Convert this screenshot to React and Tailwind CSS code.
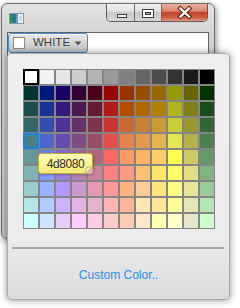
const RAW = [
  [255, 255, 255], [242, 242, 242], [230, 230, 230], [204, 204, 204], [179, 179, 179], [153, 153, 153], [128, 128, 128], [102, 102, 102], [77, 77, 77], [51, 51, 51], [26, 26, 26], [0, 0, 0],
  [0, 51, 51], [0, 25, 128], [25, 0, 104], [51, 0, 51], [77, 0, 26], [153, 0, 0], [153, 51, 0], [153, 77, 0], [153, 102, 0], [153, 153, 0], [102, 102, 0], [0, 51, 0],
  [26, 77, 77], [26, 51, 153], [51, 26, 128], [77, 26, 77], [102, 26, 51], [179, 26, 26], [179, 77, 0], [179, 102, 0], [179, 128, 0], [179, 179, 26], [128, 128, 26], [26, 77, 26],
  [51, 102, 102], [51, 77, 179], [77, 51, 153], [102, 51, 102], [128, 51, 77], [204, 51, 51], [204, 102, 51], [204, 128, 51], [204, 153, 51], [204, 204, 51], [153, 153, 51], [51, 102, 51],
  [77, 128, 128], [77, 102, 204], [102, 77, 179], [128, 77, 128], [153, 77, 102], [230, 77, 77], [230, 128, 77], [230, 153, 77], [230, 179, 77], [230, 230, 77], [179, 179, 77], [77, 128, 77],
  [102, 153, 153], [102, 128, 230], [128, 102, 204], [153, 102, 153], [179, 102, 128], [255, 102, 102], [255, 153, 102], [255, 179, 102], [255, 204, 102], [255, 255, 77], [204, 204, 102], [102, 153, 102],
  [128, 179, 179], [128, 153, 255], [153, 128, 230], [179, 128, 179], [204, 128, 153], [255, 128, 128], [255, 153, 128], [255, 191, 115], [255, 230, 102], [255, 255, 102], [224, 224, 128], [128, 179, 128],
  [153, 204, 204], [153, 179, 255], [179, 153, 255], [204, 153, 204], [230, 153, 179], [255, 153, 153], [255, 179, 128], [255, 204, 153], [255, 230, 128], [255, 255, 128], [230, 230, 153], [153, 204, 153],
  [179, 230, 230], [179, 204, 255], [204, 179, 255], [230, 179, 230], [230, 179, 204], [255, 179, 179], [255, 179, 153], [255, 230, 179], [255, 230, 153], [255, 255, 153], [230, 230, 179], [179, 230, 179],
  [204, 255, 255], [204, 230, 255], [230, 204, 255], [255, 204, 255], [255, 204, 230], [255, 204, 204], [255, 204, 179], [255, 230, 204], [255, 255, 179], [255, 255, 204], [230, 230, 204], [204, 255, 204],
];

const SELECTED = 0;
const HOVER = 48;

function AppIcon() {
  return (
    <svg width="15" height="11" viewBox="0 0 15 11" className="mt-[9px]">
      <rect x="0.5" y="0.5" width="14" height="10" fill="#eef2f6" stroke="#8a97a6" />
      <rect x="1" y="1" width="3" height="9" fill="#2f8a5a" />
      <rect x="4" y="1" width="3" height="9" fill="#2b6fb8" />
      <rect x="7" y="1" width="2" height="9" fill="#5aa0d8" />
      <rect x="10" y="3" width="3" height="5" fill="#c8d6e4" />
    </svg>
  );
}

function Caption() {
  const glass = 'bg-[linear-gradient(to_bottom,#f3f3f3_0%,#e1e1e1_42%,#c9c9c9_50%,#d6d6d6_100%)]';
  return (
    <div className="flex h-[18px] overflow-hidden rounded-b-[5px] border border-t-0 border-[#5e5e5e]">
      <div className={`w-[28px] border-r border-[#6c6c6c] ${glass}`}>
        <svg width="28" height="18">
          <rect x="10.5" y="10.5" width="9" height="3" fill="#fff" stroke="#3a3a3a" />
        </svg>
      </div>
      <div className={`w-[27px] border-r border-[#6c6c6c] ${glass}`}>
        <svg width="27" height="18">
          <rect x="7.5" y="5.5" width="11" height="8" fill="#fff" stroke="#3a3a3a" />
          <rect x="10.5" y="8.5" width="5" height="2" fill="#a8a8a8" stroke="#3a3a3a" />
        </svg>
      </div>
      <div className="w-[45px] bg-[linear-gradient(to_bottom,#eab0a2_0%,#dc8470_42%,#c5432c_50%,#cd5a40_78%,#e39a83_100%)]">
        <svg width="45" height="18">
          <path d="M18.5 4.5 L27 12.5 M27 4.5 L18.5 12.5" stroke="#4a1a10" strokeWidth="4.4" strokeLinecap="square" />
          <path d="M18.5 4.5 L27 12.5 M27 4.5 L18.5 12.5" stroke="#fff" strokeWidth="2.4" strokeLinecap="square" />
        </svg>
      </div>
    </div>
  );
}

function Combo() {
  return (
    <div className="flex h-[20px] w-[80px] items-center rounded-[3px] border border-[#3f8fd9] bg-[linear-gradient(to_bottom,#e9e9e9,#d5d5d5_50%,#c3c3c3)] pl-[4px] pr-[5px] shadow-[inset_0_1px_0_#f7f7f7]">
      <span className="h-[12px] w-[12px] border border-[#8c8c8c] bg-white" />
      <span className="ml-[8px] text-[11.5px] leading-none text-[#3b3b3b]">WHITE</span>
      <svg width="8" height="5" viewBox="0 0 8 5" className="ml-auto">
        <path d="M0.5 0.5 H7.5 L4 4.5 Z" fill="#555" />
      </svg>
    </div>
  );
}

function Swatch({ rgb, index }) {
  return (
    <div
      className="relative h-[16px] w-[16px] border border-[#858585]"
      style={{ backgroundColor: `rgb(${rgb[0]},${rgb[1]},${rgb[2]})` }}
    >
      {index === SELECTED && <div className="absolute -inset-[1px] border-2 border-black" />}
      {index === HOVER && <div className="absolute -inset-[1px] border-2 border-[#1484e6]" />}
    </div>
  );
}

function Tooltip() {
  return (
    <div className="absolute left-[30px] top-[99px] flex h-[21px] w-[55px] items-center justify-center rounded-[3px] border border-[#bfae3c] bg-[linear-gradient(to_bottom,#fffcb8,#f4ea78)] text-[12px] tracking-[-0.4px] text-[#2e2e2e] shadow-[1px_1px_2px_rgba(0,0,0,0.25)]">
      4d8080
      <svg width="8" height="8" viewBox="0 0 8 8" className="absolute bottom-[-1px] right-[-1px]">
        <path d="M0.5 7.5 L7.5 0.5 L7.5 7.5 Z" fill="#eab0b8" />
        <path d="M0.5 7.5 L7.5 0.5 L1.5 1.5 Z" fill="#fffde6" stroke="#b9a94a" strokeWidth="0.8" />
      </svg>
    </div>
  );
}

export default function App() {
  return (
    <div className="relative h-[308px] w-[240px] overflow-hidden bg-white font-['Liberation_Sans',sans-serif]">
      <div className="absolute left-[1px] top-[3px] flex h-[236px] w-[214px] flex-col rounded-[6px] border border-[#6f6f6f] bg-[linear-gradient(to_bottom,#e3e3e3,#d2d2d2_14%,#c3c3c3)] shadow-[1px_2px_6px_rgba(0,0,0,0.45)]">
        <div className="flex h-[28px] items-start justify-between pl-[7px] pr-[6px]">
          <AppIcon />
          <Caption />
        </div>
        <div className="mx-[5px] mb-[5px] flex-1 border border-[#646464] bg-white">
          <Combo />
        </div>
      </div>

      <div className="absolute left-[7px] top-[53px] flex h-[247px] w-[223px] flex-col rounded-[4px] border border-[#a9a9a9] bg-[linear-gradient(to_bottom,#efefef,#ececec_75%,#dbdbdb)] px-[4px] shadow-[0_0_7px_rgba(0,0,0,0.45)]">
        <div className="ml-[11px] mt-[15px] grid w-[192px] grid-cols-[repeat(12,16px)]">
          {RAW.map((rgb, i) => (
            <Swatch key={i} rgb={rgb} index={i} />
          ))}
        </div>
        <div className="mt-[18px] h-[2px] w-[212px] bg-[#a7a7a7]" />
        <div className="mt-[18px] text-center text-[12px] leading-[16px] text-[#2390ef]">Custom Color..</div>
        <Tooltip />
      </div>
    </div>
  );
}
